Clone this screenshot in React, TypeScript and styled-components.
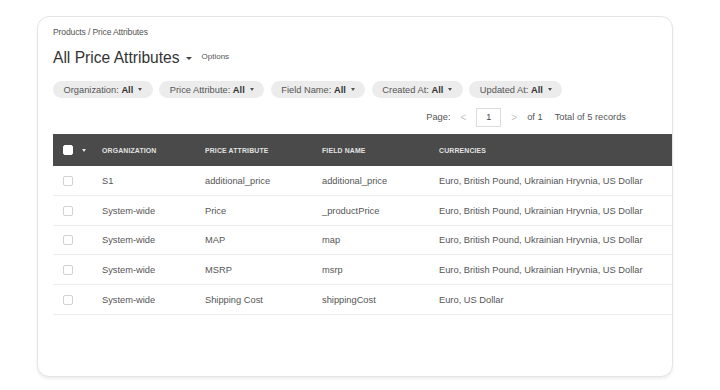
import React from "react";
import styled, { createGlobalStyle } from "styled-components";

type Row = {
  org: string;
  attribute: string;
  field: string;
  currencies: string;
};

const rows: Row[] = [
  {
    org: "S1",
    attribute: "additional_price",
    field: "additional_price",
    currencies: "Euro, British Pound, Ukrainian Hryvnia, US Dollar",
  },
  {
    org: "System-wide",
    attribute: "Price",
    field: "_productPrice",
    currencies: "Euro, British Pound, Ukrainian Hryvnia, US Dollar",
  },
  {
    org: "System-wide",
    attribute: "MAP",
    field: "map",
    currencies: "Euro, British Pound, Ukrainian Hryvnia, US Dollar",
  },
  {
    org: "System-wide",
    attribute: "MSRP",
    field: "msrp",
    currencies: "Euro, British Pound, Ukrainian Hryvnia, US Dollar",
  },
  {
    org: "System-wide",
    attribute: "Shipping Cost",
    field: "shippingCost",
    currencies: "Euro, US Dollar",
  },
];

const filters = [
  "Organization",
  "Price Attribute",
  "Field Name",
  "Created At",
  "Updated At",
];

const GlobalStyle = createGlobalStyle`
  html, body {
    margin: 0;
    padding: 0;
    background: #fff;
  }
  body {
    font-family: "Liberation Sans", Arial, sans-serif;
    color: #444;
  }
`;

const Page = styled.div`
  width: 720px;
  height: 390px;
  padding: 16px 0 0 37px;
  box-sizing: border-box;
  overflow: hidden;
`;

const Card = styled.div`
  width: 636px;
  height: 361px;
  box-sizing: border-box;
  border: 1px solid #e4e4e4;
  border-radius: 12px;
  box-shadow: 0 2px 3px rgba(0, 0, 0, 0.07);
  background: #fff;
  overflow: hidden;
  padding: 9px 0 0 15px;
  display: flex;
  flex-direction: column;
`;

const Breadcrumb = styled.div`
  font-size: 8.6px;
  color: #555;
  letter-spacing: -0.15px;
  line-height: 12px;
`;

const TitleRow = styled.div`
  display: flex;
  align-items: center;
  gap: 10px;
  margin-top: 9px;
  height: 22px;
`;

const Title = styled.h1`
  margin: 0;
  font-size: 15.6px;
  font-weight: normal;
  color: #333;
  display: flex;
  align-items: center;
  gap: 6px;
`;

const Caret = styled.span<{ $color?: string; $size?: number }>`
  display: inline-block;
  width: 0;
  height: 0;
  border-left: ${(p) => p.$size ?? 3}px solid transparent;
  border-right: ${(p) => p.$size ?? 3}px solid transparent;
  border-top: ${(p) => (p.$size ?? 3) + 0.5}px solid ${(p) => p.$color ?? "#444"};
`;

const Options = styled.span`
  font-size: 8px;
  color: #555;
  margin-top: -3px;
`;

const FilterBar = styled.div`
  display: flex;
  gap: 6.5px;
  margin-top: 12px;
`;

const Pill = styled.div`
  height: 17px;
  padding: 0 10.5px;
  border-radius: 9px;
  background: #ececec;
  font-size: 9.3px;
  color: #555;
  display: flex;
  align-items: center;
  gap: 5px;

  b {
    color: #333;
  }
`;

const Pager = styled.div`
  display: flex;
  align-items: center;
  justify-content: flex-end;
  padding-right: 46px;
  margin-top: 9px;
  height: 20px;
  font-size: 9.3px;
  color: #555;
`;

const Arrow = styled.span`
  color: #c4c4c4;
  font-size: 10px;
  margin: 0 10px;
`;

const PageInput = styled.div`
  width: 25px;
  height: 19px;
  border: 1px solid #dcdcdc;
  box-sizing: border-box;
  display: flex;
  align-items: center;
  justify-content: center;
  font-size: 9px;
  color: #444;
`;

const Total = styled.span`
  margin-left: 12px;
`;

const Table = styled.div`
  margin-top: 7px;
`;

const RowGrid = styled.div`
  display: grid;
  grid-template-columns: 49px 103px 117px 117px 1fr;
  align-items: center;
`;

const HeadRow = styled(RowGrid)`
  height: 32px;
  background: #4a4a4a;
  color: #e2e2e2;
  font-size: 6.9px;
  font-weight: bold;
  letter-spacing: 0.15px;
  text-transform: uppercase;
`;

const BodyRow = styled(RowGrid)`
  box-sizing: border-box;
  height: 29.8px;
  padding-top: 1px;
  border-bottom: 1px solid #ededed;
  font-size: 9.3px;
  color: #555;
`;

const CheckCell = styled.div`
  display: flex;
  align-items: center;
  gap: 9px;
  padding-left: 10px;
`;

const Box = styled.span<{ $filled?: boolean }>`
  display: inline-block;
  width: 10px;
  height: 10px;
  box-sizing: border-box;
  border-radius: 2px;
  background: #fff;
  border: 1px solid ${(p) => (p.$filled ? "#fff" : "#d2d2d2")};
`;

export default function App() {
  return (
    <>
      <GlobalStyle />
      <Page>
        <Card>
          <Breadcrumb>Products / Price Attributes</Breadcrumb>
          <TitleRow>
            <Title>
              All Price Attributes <Caret $color="#444" />
            </Title>
            <Options>Options</Options>
          </TitleRow>
          <FilterBar>
            {filters.map((f) => (
              <Pill key={f}>
                <span>
                  {f}: <b>All</b>
                </span>
                <Caret $color="#555" $size={2.5} />
              </Pill>
            ))}
          </FilterBar>
          <Pager>
            <span>Page:</span>
            <Arrow>&lt;</Arrow>
            <PageInput>1</PageInput>
            <Arrow>&gt;</Arrow>
            <span>of 1</span>
            <Total>Total of 5 records</Total>
          </Pager>
          <Table>
            <HeadRow>
              <CheckCell>
                <Box $filled />
                <Caret $color="#e2e2e2" $size={2.5} />
              </CheckCell>
              <div>Organization</div>
              <div>Price Attribute</div>
              <div>Field Name</div>
              <div>Currencies</div>
            </HeadRow>
            {rows.map((r, i) => (
              <BodyRow key={i}>
                <CheckCell>
                  <Box />
                </CheckCell>
                <div>{r.org}</div>
                <div>{r.attribute}</div>
                <div>{r.field}</div>
                <div>{r.currencies}</div>
              </BodyRow>
            ))}
          </Table>
        </Card>
      </Page>
    </>
  );
}
